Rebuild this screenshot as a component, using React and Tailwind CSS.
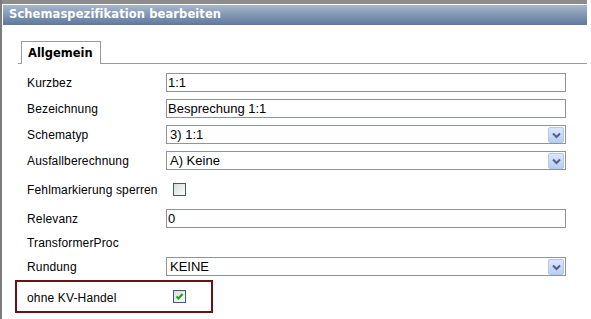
import React from "react";

const Chevron = () => (
  <div className="absolute right-[1px] top-[1px] w-[16px] h-[16px] bg-gradient-to-b from-[#dce6fb] to-[#b9cdf5] border border-[#b4c7ee] rounded-[2px] flex items-center justify-center">
    <svg width="9" height="7" viewBox="0 0 9 7">
      <path d="M1 1.5 L4.5 5 L8 1.5" stroke="#4d6185" strokeWidth="2" fill="none" />
    </svg>
  </div>
);

const TextInput = ({ value }) => (
  <div className="w-[400px] h-[19px] border border-[#8f949a] bg-white flex items-center pl-[1px] text-[13px] text-black leading-none">
    {value}
  </div>
);

const Select = ({ value }) => (
  <div className="relative w-[400px] h-[19px] border border-[#8f949a] bg-white flex items-center pl-[3px] text-[13px] text-black leading-none">
    {value}
    <Chevron />
  </div>
);

const Checkbox = ({ checked }) => (
  <div className="w-[13px] h-[13px] border border-[#3d5a78] bg-gradient-to-br from-[#dcdcd7] to-[#fbfbf9] flex items-center justify-center">
    {checked && (
      <svg width="9" height="9" viewBox="0 0 9 9">
        <path d="M1.5 4.5 L3.5 6.5 L7.5 2" stroke="#21a121" strokeWidth="2" fill="none" />
      </svg>
    )}
  </div>
);

const Row = ({ label, children, className = "" }) => (
  <div className={"flex items-center h-[19px] " + className}>
    <div className="w-[139px] shrink-0 text-[12px] tracking-[0.15px] text-black leading-none">{label}</div>
    {children}
  </div>
);

export default function App() {
  return (
    <div className="w-[591px] h-[319px] bg-white flex overflow-hidden font-['Liberation_Sans',Arial,sans-serif]">
      <div className="w-[2px] h-full bg-[#7c7c7c] shrink-0" />
      <div className="flex-1 flex flex-col">
        <div className="h-[4px] w-[585px] bg-[#8c8c8c]" />
        <div className="h-[1px]" />
        <div className="h-[20px] w-[584px] ml-[1px] bg-gradient-to-b from-[#a8b6ca] via-[#8197b5] to-[#5f789b] flex items-center pl-[6px] text-white font-bold text-[11.5px] font-['DejaVu_Sans',Verdana,sans-serif] tracking-[0.1px]">
          Schemaspezifikation bearbeiten
        </div>
        <div className="mt-[16px] flex items-end h-[23px]">
          <div className="w-[16px]" />
          <div className="w-[3px] h-[23px] border-b border-[#9a9a9a]" />
          <div className="w-[80px] h-[23px] border-t border-l border-r border-[#9a9a9a] flex items-center pl-[6px] pt-[1px] text-[11.5px] font-bold text-black font-['DejaVu_Sans',Verdana,sans-serif]">
            Allgemein
          </div>
          <div className="w-[486px] h-[23px] border-b border-[#9a9a9a]" />
        </div>
        <div className="flex flex-col pl-[25px]">
          <Row label="Kurzbez" className="mt-[9px]">
            <TextInput value="1:1" />
          </Row>
          <Row label="Bezeichnung" className="mt-[7px]">
            <TextInput value="Besprechung 1:1" />
          </Row>
          <Row label="Schematyp" className="mt-[7px]">
            <Select value="3) 1:1" />
          </Row>
          <Row label="Ausfallberechnung" className="mt-[7px]">
            <Select value="A) Keine" />
          </Row>
          <Row label="Fehlmarkierung sperren" className="mt-[10px]">
            <div className="ml-[7px]">
              <Checkbox />
            </div>
          </Row>
          <Row label="Relevanz" className="mt-[10px]">
            <TextInput value="0" />
          </Row>
          <Row label="TransformerProc" className="mt-[5px]" />
          <Row label="Rundung" className="mt-[5px]">
            <Select value="KEINE" />
          </Row>
        </div>
        <div className="ml-[13px] mt-[4px] w-[198px] h-[33px] border-2 border-[#6b1116] flex items-center pl-[10px]">
          <div className="w-[146px] shrink-0 text-[12px] tracking-[0.15px] text-black leading-none pt-[3px]">ohne KV-Handel</div>
          <Checkbox checked />
        </div>
      </div>
    </div>
  );
}
